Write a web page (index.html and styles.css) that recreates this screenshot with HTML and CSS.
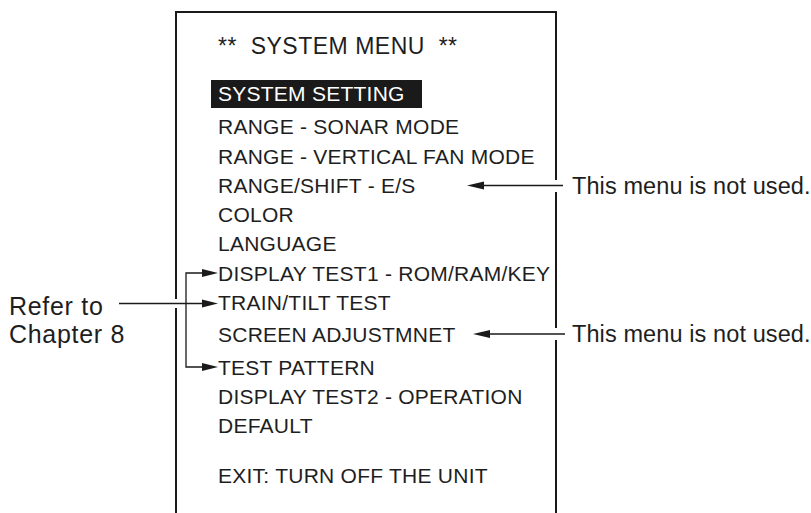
FILE: index.html
```html
<!DOCTYPE html>
<html lang="en">
<head>
    <meta charset="UTF-8">
    <meta name="viewport" content="width=device-width, initial-scale=1.0">
    <title>System Menu</title>
    <link rel="stylesheet" href="styles.css">
</head>
<body>
    <div class="figure">
        <div class="left-note">
            <div class="note-big">Refer to</div>
            <div class="note-big">Chapter 8</div>
        </div>

        <div class="menu-box">
            <div class="menu-title">**  SYSTEM MENU  **</div>
            <div class="item selected">SYSTEM SETTING</div>
            <div class="item">RANGE - SONAR MODE</div>
            <div class="item">RANGE - VERTICAL FAN MODE</div>
            <div class="item">RANGE/SHIFT - E/S</div>
            <div class="item">COLOR</div>
            <div class="item">LANGUAGE</div>
            <div class="item">DISPLAY TEST1 - ROM/RAM/KEY</div>
            <div class="item">TRAIN/TILT TEST</div>
            <div class="item spaced">SCREEN ADJUSTMNET</div>
            <div class="item spaced">TEST PATTERN</div>
            <div class="item">DISPLAY TEST2 - OPERATION</div>
            <div class="item">DEFAULT</div>
            <div class="item exit">EXIT: TURN OFF THE UNIT</div>
        </div>

        <div class="right-notes">
            <div class="note first">This menu is not used.</div>
            <div class="note second">This menu is not used.</div>
        </div>

        <!-- callout arrows -->
        <svg class="arrows" width="811" height="513" viewBox="0 0 811 513">
            <rect x="173" y="299" width="7" height="9" fill="#fff"/>
            <rect x="553" y="180" width="7" height="12" fill="#fff"/>
            <rect x="553" y="328" width="7" height="12" fill="#fff"/>

            <g stroke="#1a1a1a" stroke-width="1.3" fill="none">
                <path d="M119 303.5 H204"/>
                <path d="M204 273 H186 V367 H204"/>
                <path d="M482 185.5 H563"/>
                <path d="M488 334 H565"/>
            </g>
            <g fill="#1a1a1a">
                <polygon points="218,303.5 202,299.5 202,307.5"/>
                <polygon points="218,273 202,269 202,277"/>
                <polygon points="218,367 202,363 202,371"/>
                <polygon points="467,185.5 484,181.5 484,189.5"/>
                <polygon points="473,334 490,330 490,338"/>
            </g>
        </svg>
    </div>
</body>
</html>
```

FILE: styles.css
```css
body {
    margin: 0;
    padding: 0;
    background-color: #fff;
    color: #1e1e1e;
    font-family: "Liberation Sans", Arial, sans-serif;
}

.figure {
    position: relative;
    display: flex;
    width: 811px;
    height: 513px;
    overflow: hidden;
}

.left-note {
    width: 166px;
    flex: none;
    padding: 291.8px 0 0 9px;
}
.note-big {
    font-size: 25px;
    line-height: 28px;
    letter-spacing: 0.7px;
    white-space: nowrap;
}

.menu-box {
    box-sizing: border-box;
    flex: none;
    width: 382px;
    height: 502px;
    margin-top: 11px;
    border: 2px solid #1a1a1a;
    border-bottom: none;
    padding: 17.5px 0 0 41px;
}
.menu-title {
    font-size: 23px;
    line-height: 30px;
    letter-spacing: 0.5px;
    white-space: pre;
    margin-bottom: 19.75px;
}
.item {
    font-size: 21px;
    line-height: 29.3px;
    letter-spacing: 0.25px;
    white-space: nowrap;
}
.item.selected {
    width: fit-content;
    line-height: 28px;
    margin: 0 0 4px -7px;
    padding: 0 17px 0 7px;
    background-color: #1a1a1a;
    color: #fff;
}
.item.spaced {
    margin-top: 3px;
}
.item.exit {
    margin-top: 20.7px;
}

.right-notes {
    flex: 1;
    padding-left: 15px;
}
.note {
    font-size: 23.5px;
    line-height: 30px;
    letter-spacing: 0.1px;
    white-space: nowrap;
}
.note.first {
    margin-top: 170.8px;
}
.note.second {
    margin-top: 118.5px;
}

.arrows {
    position: absolute;
    top: 0;
    left: 0;
    pointer-events: none;
}
```
